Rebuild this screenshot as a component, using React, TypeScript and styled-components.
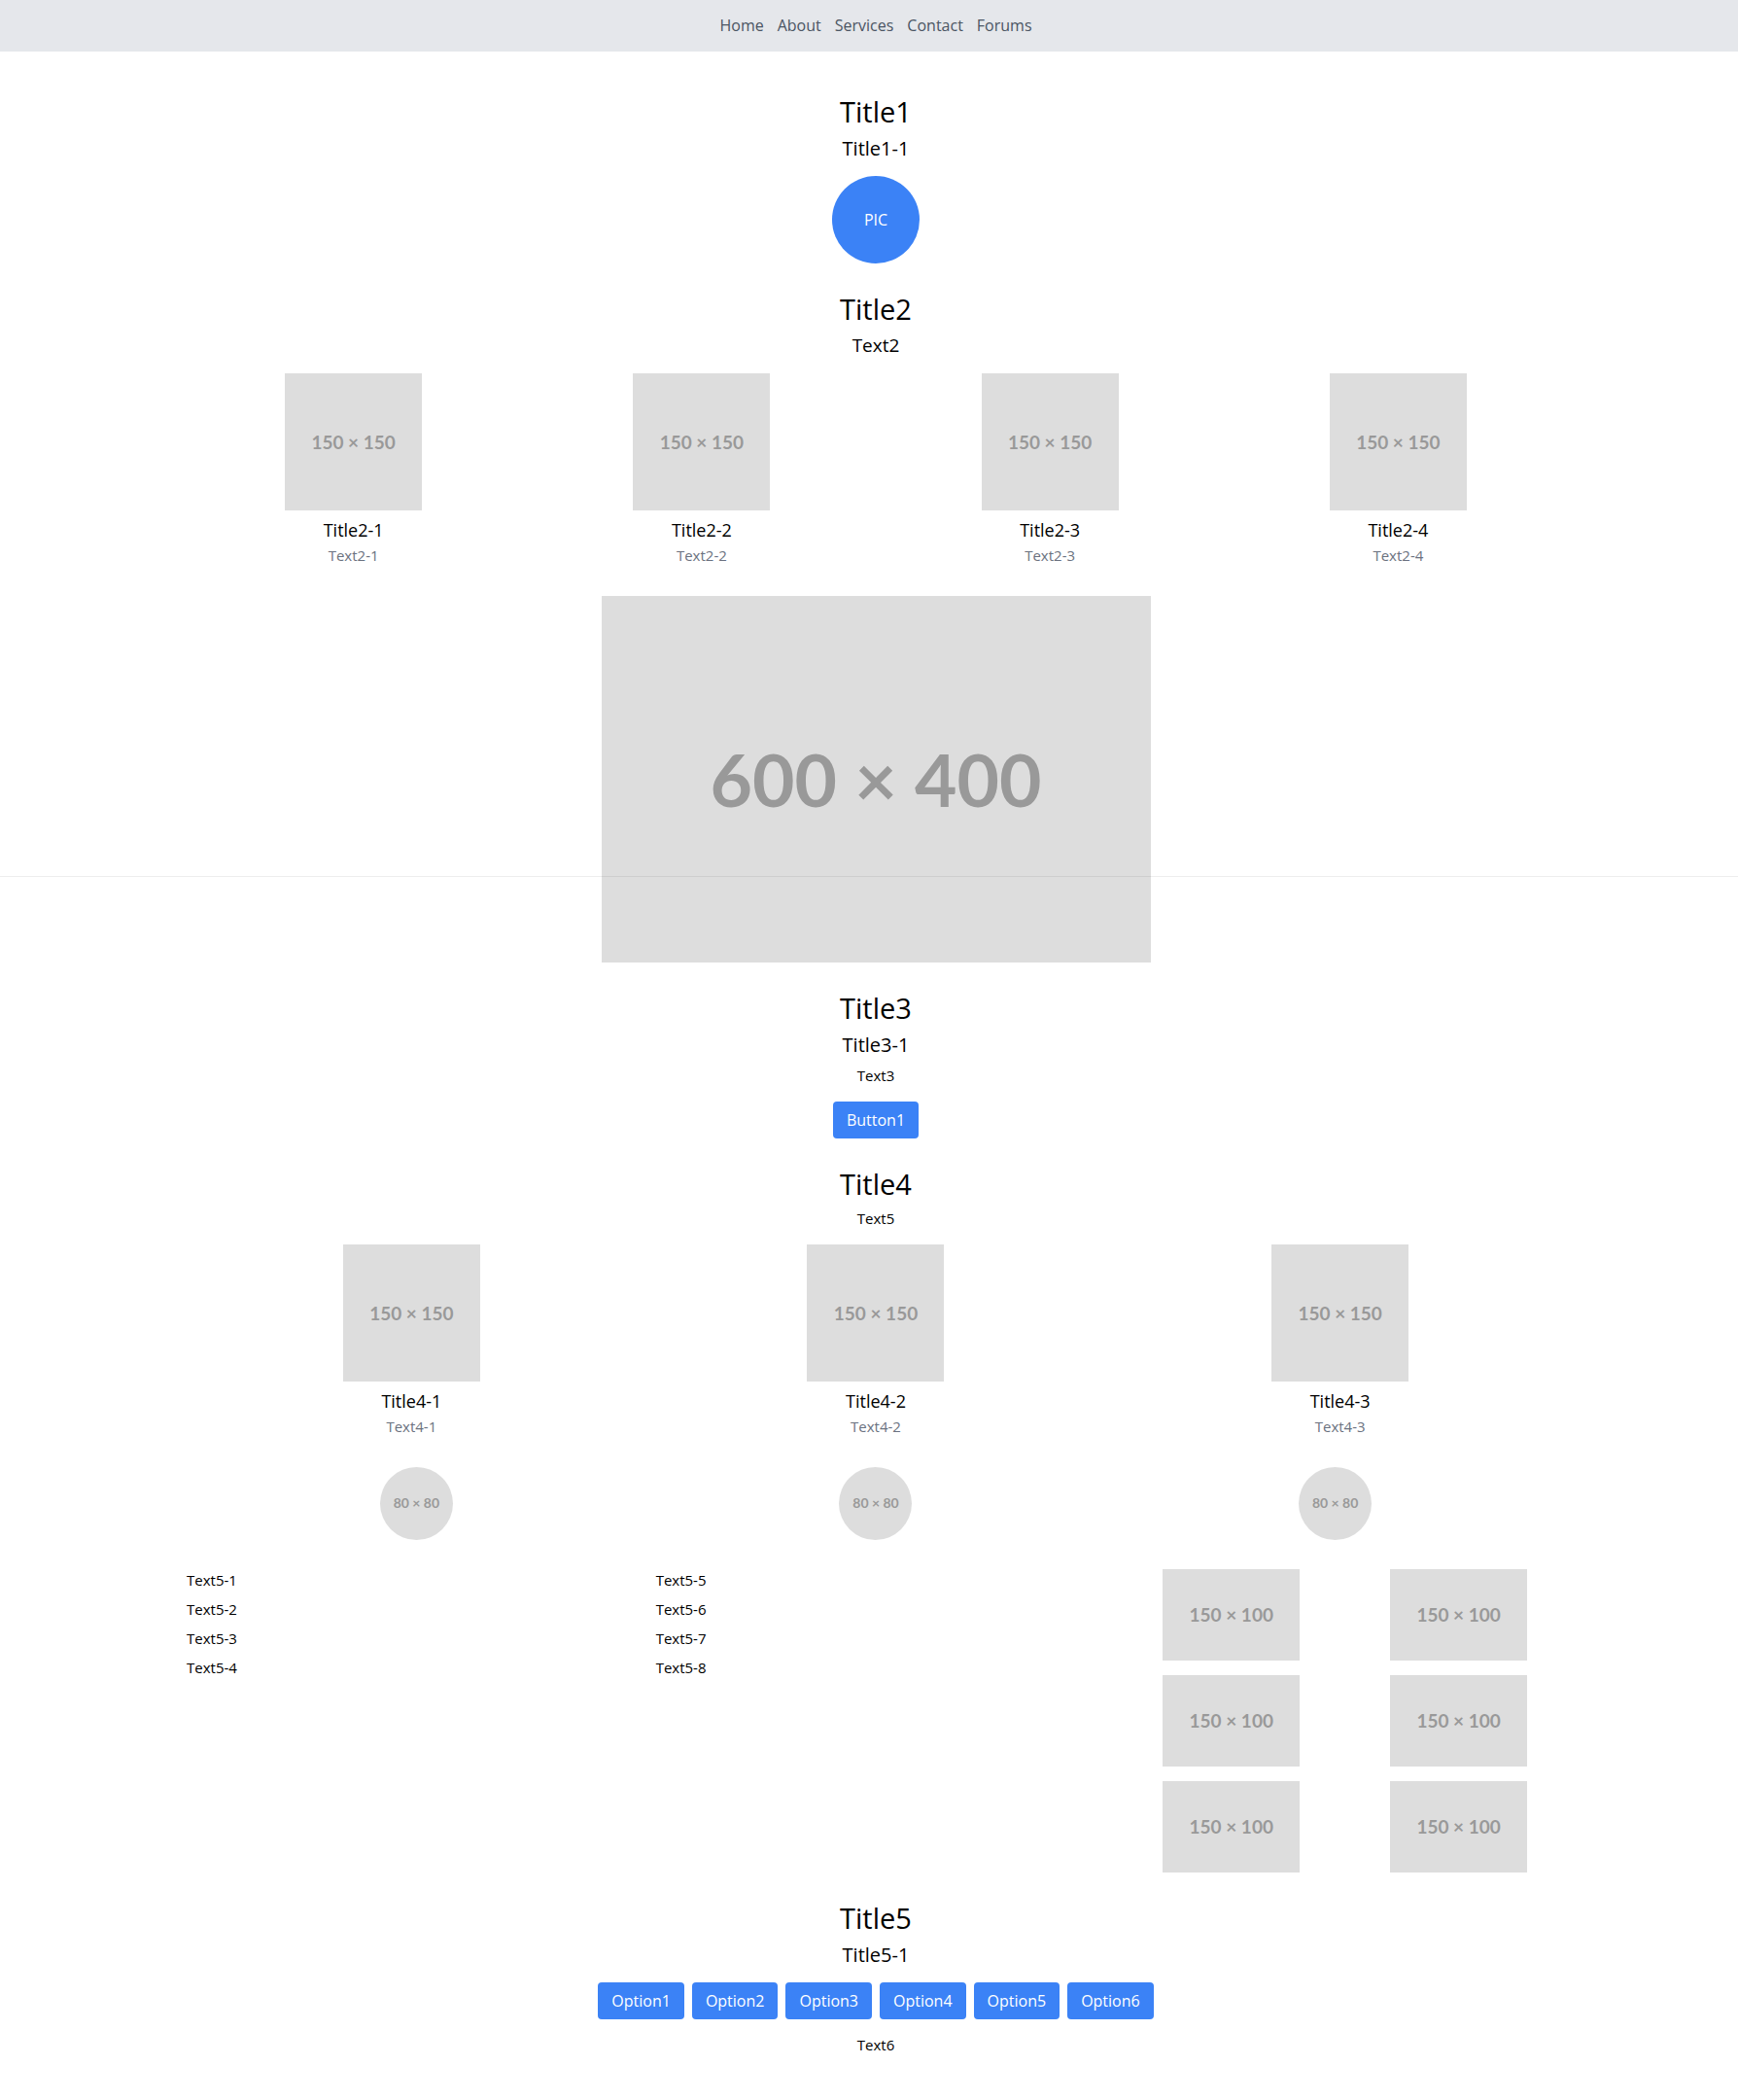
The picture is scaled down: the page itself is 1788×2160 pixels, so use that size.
import React from "react";
import styled, { createGlobalStyle } from "styled-components";

const GlobalStyle = createGlobalStyle`
  *, *::before, *::after { box-sizing: border-box; }
  body {
    margin: 0;
    background: #ffffff;
    color: #000000;
    font-family: "Open Sans", "Noto Sans", sans-serif;
    font-size: 15px;
    line-height: 23px;
  }
  h1, h2, h3, p, ul { margin: 0; padding: 0; font-weight: 400; }
  ul { list-style: none; }
`;

const gutter = "14px";

const NavBar = styled.nav`
  display: flex;
  justify-content: center;
  gap: 14px;
  padding: 15px 0 15px ${gutter};
  background: #e5e7eb;
`;

const NavLink = styled.a`
  color: #4b5563;
  font-size: 16px;
  text-decoration: none;
`;

const Main = styled.main`
  display: flex;
  flex-direction: column;
  gap: 30px;
  padding: 45px 0;
`;

const Band = styled.section`
  padding-left: ${gutter};
`;

const Container = styled.div`
  max-width: 1448px;
  margin: 0 auto;
  padding: 0 15px;
`;

const Stack = styled(Container)`
  display: flex;
  flex-direction: column;
  align-items: center;
  gap: 15px;
`;

const Heading = styled.header`
  display: flex;
  flex-direction: column;
  text-align: center;
`;

const Title = styled.h2`
  margin-bottom: 8px;
  font-size: 29px;
  line-height: 33px;
`;

const Subtitle = styled.p`
  font-size: 20px;
  line-height: 27px;

  & + p {
    margin-top: 7px;
  }
`;

const Lead = styled(Subtitle)`
  font-size: 19px;
`;

const Text = styled.p`
  font-size: 15px;
  line-height: 23px;
`;

const Avatar = styled.div`
  display: flex;
  align-items: center;
  justify-content: center;
  width: 90px;
  height: 90px;
  border-radius: 50%;
  background: #3b82f6;
  color: #ffffff;
  font-size: 16px;
`;

const Button = styled.button`
  padding: 8px 14px 7px;
  border: 0;
  border-radius: 4px;
  background: #3b82f6;
  color: #ffffff;
  font-family: inherit;
  font-size: 16px;
  line-height: 23px;
  cursor: pointer;
`;

const ButtonRow = styled.div`
  display: flex;
  flex-wrap: wrap;
  justify-content: center;
  gap: 8px;
`;

const CardGrid = styled.div<{ $columns: number }>`
  display: grid;
  grid-template-columns: repeat(${(p) => p.$columns}, 1fr);
  gap: 15px;
  width: 100%;
`;

const Card = styled.article`
  display: flex;
  flex-direction: column;
  align-items: center;
`;

const CardTitle = styled.h3`
  margin: 7px 0 2px;
  font-size: 18px;
  line-height: 26px;
`;

const CardText = styled.p`
  color: #6b7280;
`;

const Placeholder = styled.div<{ $w: number; $h: number; $size: number; $round?: boolean }>`
  display: flex;
  align-items: center;
  justify-content: center;
  width: ${(p) => p.$w}px;
  height: ${(p) => p.$h}px;
  padding-bottom: 1px;
  border-radius: ${(p) => (p.$round ? "50%" : "0")};
  background: #dddddd;
  color: #999999;
  font-family: Lato, sans-serif;
  font-size: ${(p) => p.$size}px;
  font-weight: 700;
  line-height: 1;
`;

const HeroBand = styled(Band)`
  position: relative;
  display: flex;
  justify-content: center;

  &::after {
    content: "";
    position: absolute;
    top: 288px;
    left: 0;
    right: 0;
    height: 1px;
    background: rgba(0, 0, 0, 0.07);
  }
`;

const CircleRow = styled(Container)`
  display: flex;
  justify-content: space-around;
`;

const Columns = styled(Container)`
  display: grid;
  grid-template-columns: repeat(3, 1fr);
  gap: 30px;
`;

const List = styled.ul`
  display: flex;
  flex-direction: column;
  gap: 7px;
`;

const Gallery = styled.div`
  display: grid;
  grid-template-columns: repeat(2, 1fr);
  gap: 15px;
  justify-items: center;
`;

const Square = () => <Placeholder $w={141} $h={141} $size={19}>150 × 150</Placeholder>;

const Cards = ({ section, count }: { section: number; count: number }) => (
  <CardGrid $columns={count}>
    {Array.from({ length: count }, (_, i) => (
      <Card key={i}>
        <Square />
        <CardTitle>{`Title${section}-${i + 1}`}</CardTitle>
        <CardText>{`Text${section}-${i + 1}`}</CardText>
      </Card>
    ))}
  </CardGrid>
);

const links = ["Home", "About", "Services", "Contact", "Forums"];

export default function App() {
  return (
    <>
      <GlobalStyle />
      <NavBar>
        {links.map((l) => (
          <NavLink key={l} href={`#${l.toLowerCase()}`}>{l}</NavLink>
        ))}
      </NavBar>
      <Main>
        <Band>
          <Stack>
            <Heading>
              <Title as="h1">Title1</Title>
              <Subtitle>Title1-1</Subtitle>
            </Heading>
            <Avatar>PIC</Avatar>
          </Stack>
        </Band>
        <Band>
          <Stack>
            <Heading>
              <Title>Title2</Title>
              <Lead>Text2</Lead>
            </Heading>
            <Cards section={2} count={4} />
          </Stack>
        </Band>
        <HeroBand>
          <Placeholder $w={565} $h={377} $size={75}>600 × 400</Placeholder>
        </HeroBand>
        <Band>
          <Stack>
            <Heading>
              <Title>Title3</Title>
              <Subtitle>Title3-1</Subtitle>
              <Text>Text3</Text>
            </Heading>
            <Button type="button">Button1</Button>
          </Stack>
        </Band>
        <Band>
          <Stack>
            <Heading>
              <Title>Title4</Title>
              <Text>Text5</Text>
            </Heading>
            <Cards section={4} count={3} />
          </Stack>
        </Band>
        <Band>
          <CircleRow>
            {[1, 2, 3].map((n) => (
              <Placeholder key={n} $w={75} $h={75} $size={14} $round>80 × 80</Placeholder>
            ))}
          </CircleRow>
        </Band>
        <Band>
          <Columns>
            {[[1, 2, 3, 4], [5, 6, 7, 8]].map((group) => (
              <List key={group[0]}>
                {group.map((n) => (
                  <li key={n}>{`Text5-${n}`}</li>
                ))}
              </List>
            ))}
            <Gallery>
              {[1, 2, 3, 4, 5, 6].map((n) => (
                <Placeholder key={n} $w={141} $h={94} $size={19}>150 × 100</Placeholder>
              ))}
            </Gallery>
          </Columns>
        </Band>
        <Band>
          <Stack>
            <Heading>
              <Title>Title5</Title>
              <Subtitle>Title5-1</Subtitle>
            </Heading>
            <ButtonRow>
              {[1, 2, 3, 4, 5, 6].map((n) => (
                <Button key={n} type="button">{`Option${n}`}</Button>
              ))}
            </ButtonRow>
            <Text>Text6</Text>
          </Stack>
        </Band>
      </Main>
    </>
  );
}
